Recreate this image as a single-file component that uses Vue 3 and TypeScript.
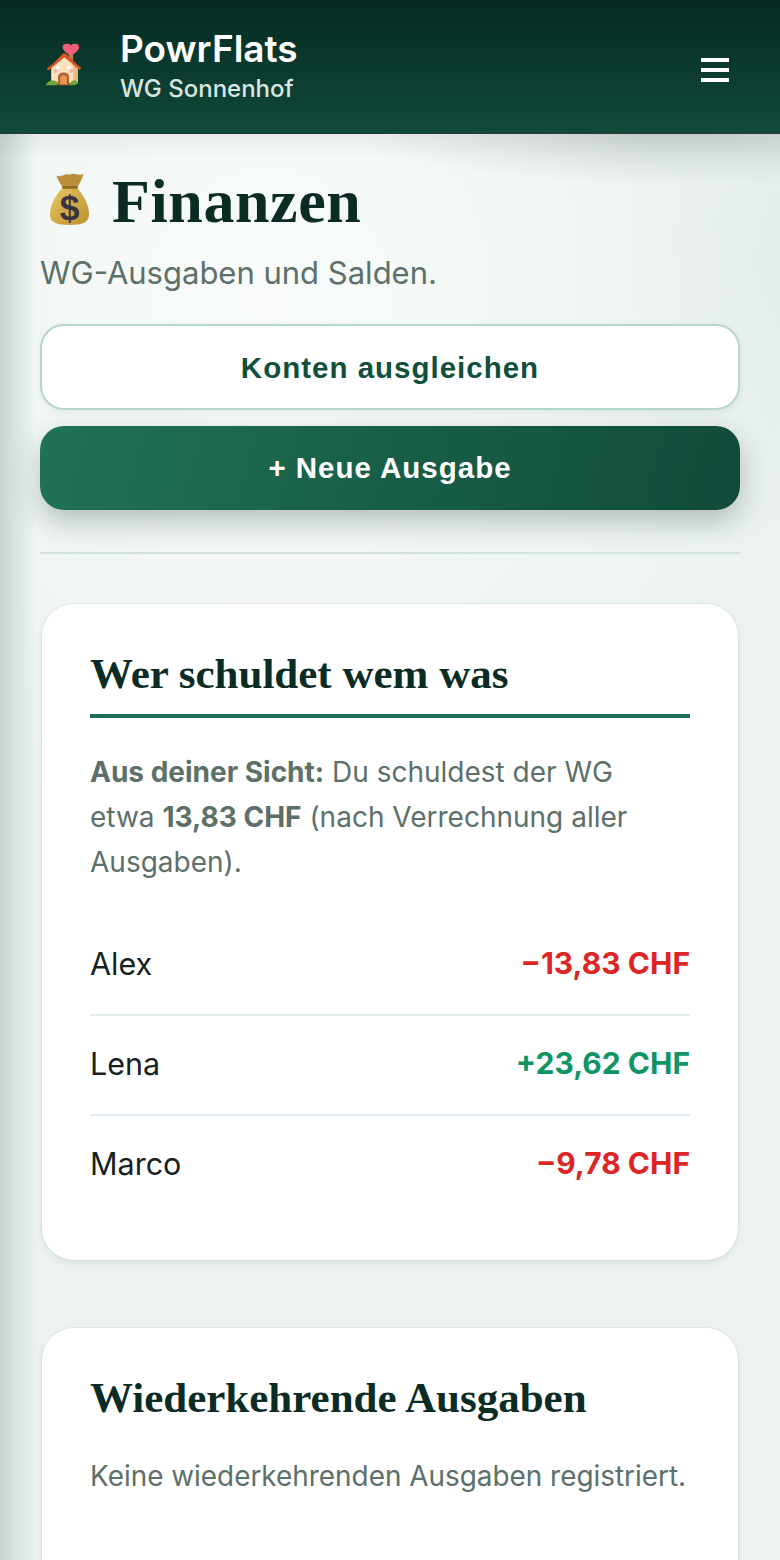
<template>
  <div class="app-shell">
    <header class="topbar">
      <div class="brand">
        <svg class="brand-icon" viewBox="0 0 40 48" aria-hidden="true">
          <rect x="25" y="11" width="5" height="13" fill="#b9784a" />
          <path d="M27.5 14 C21 10 18.5 7.5 18.5 4.4 C18.5 1 23 -.3 27.5 2.4 C32 -.3 36.5 1 36.5 4.4 C36.5 7.5 34 10 27.5 14Z" fill="#ee5f78" />
          <path d="M6 26 L20 13 L35 26 L35 44 L6 44Z" fill="#fae3bd" />
          <path d="M28 22 L35 27 L35 44 L30 44 L30 26Z" fill="#e5bb83" />
          <path d="M1 28 C8 23 14 17 19 11.5 L22 11.5 C27 17 33 23 39 27 L37 29.5 L20.5 15.5 L3 30Z" fill="#dc5227" />
          <circle cx="13.5" cy="26.5" r="1.8" fill="#fff" />
          <circle cx="25" cy="26.5" r="1.8" fill="#fff" />
          <circle cx="10.5" cy="30.5" r="2.2" fill="#f5b3a2" />
          <circle cx="28" cy="30.5" r="2.2" fill="#f5b3a2" />
          <path d="M13.5 46 V37 C13.5 30.5 25.5 30.5 25.5 37 V46Z" fill="#b95f2b" />
          <path d="M16 45 V38 C16 34 23 34 23 38 V45Z" fill="#e19a56" />
          <path d="M0 46 C2 41 9 39 13.5 43 L12.5 46Z" fill="#73a838" />
          <path d="M25.5 46 C28 40 32 39 35 43 C34 46 30 46 25.5 46Z" fill="#73a838" />
        </svg>
        <div class="brand-text">
          <span class="brand-name">PowrFlats</span>
          <span class="brand-sub">WG Sonnenhof</span>
        </div>
      </div>
      <button class="menu-btn" type="button" aria-label="Menü">
        <span></span><span></span><span></span>
      </button>
    </header>

    <main class="content">
      <h1 class="page-title">
        <svg class="title-icon" viewBox="0 0 44 58" aria-hidden="true">
          <defs>
            <linearGradient id="bagFill" x1="0" y1="0" x2="1" y2="1">
              <stop offset="0" stop-color="#e8c765" />
              <stop offset="1" stop-color="#bd8f30" />
            </linearGradient>
          </defs>
          <path d="M8 4 C14 6 17 1 22 3 C27 0 32 5 37 2 C36 7 33 12 30 17 H15 C12 12 9 8 8 4Z" fill="#bb8e3a" />
          <path d="M15 16 C8 24 1 34 1 46 C1 54 8 57 22 57 C36 57 43 54 43 46 C43 34 36 24 30 16Z" fill="url(#bagFill)" />
          <rect x="14" y="15" width="17" height="3" rx="1.5" fill="#8f6a22" />
          <text x="22" y="52" class="dollar">$</text>
        </svg>
        <span class="title-text">Finanzen</span>
      </h1>
      <p class="page-sub">WG-Ausgaben und Salden.</p>

      <div class="actions">
        <button class="btn btn-outline" type="button">Konten ausgleichen</button>
        <button class="btn btn-primary" type="button">+ Neue Ausgabe</button>
      </div>

      <hr class="divider" />

      <section class="card">
        <h2 class="card-title underlined">Wer schuldet wem was</h2>
        <p class="note summary">
          <strong>Aus deiner Sicht:</strong> Du schuldest der WG etwa
          <strong>13,83 CHF</strong> (nach Verrechnung aller Ausgaben).
        </p>
        <ul class="balances">
          <li v-for="item in balances" :key="item.name" class="balance-row">
            <span class="balance-name">{{ item.name }}</span>
            <span class="balance-value" :class="item.amount.startsWith('+') ? 'pos' : 'neg'">{{ item.amount }}</span>
          </li>
        </ul>
      </section>

      <section class="card">
        <h2 class="card-title">Wiederkehrende Ausgaben</h2>
        <p class="note empty">Keine wiederkehrenden Ausgaben registriert.</p>
      </section>
    </main>
  </div>
</template>

<script setup lang="ts">
interface Balance {
  name: string;
  amount: string;
}

const balances: Balance[] = [
  { name: 'Alex', amount: '−13,83 CHF' },
  { name: 'Lena', amount: '+23,62 CHF' },
  { name: 'Marco', amount: '−9,78 CHF' },
];
</script>

<style>
html,
body {
  margin: 0;
  background: #ecf3ef;
}
</style>

<style scoped>
.app-shell {
  width: 780px;
  height: 1560px;
  overflow: hidden;
  position: relative;
  font-family: Inter, "Noto Sans", sans-serif;
  background:
    radial-gradient(300px 50px at 660px 134px, rgba(40, 60, 50, 0.16), rgba(40, 60, 50, 0) 100%),
    linear-gradient(180deg, rgba(0, 0, 0, 0.05), rgba(0, 0, 0, 0) 24px) 0 134px no-repeat,
    linear-gradient(90deg, #c6d4cf 0, #dbe5e1 18px, rgba(230, 238, 235, 0) 36px),
    radial-gradient(520px 560px at 270px 300px, #f8fbfa 0, rgba(248, 251, 250, 0) 100%),
    radial-gradient(240px 300px at 780px 260px, #e3ece8 0, rgba(227, 236, 232, 0) 100%),
    #ecf3ef;
}

.topbar {
  height: 134px;
  box-sizing: border-box;
  padding: 0 51px 0 40px;
  display: flex;
  align-items: center;
  justify-content: space-between;
  background: linear-gradient(180deg, #062a22, #104a3a);
  border-bottom: 1px solid #1f3a33;
}

.brand {
  display: flex;
  align-items: center;
  gap: 37px;
}

.brand-icon {
  width: 38px;
  height: 44px;
  margin: -3px 0 0 5px;
}

.brand-text {
  display: flex;
  flex-direction: column;
  gap: 5px;
  margin-top: -2px;
}

.brand-name {
  color: #fff;
  font-size: 37px;
  line-height: 42px;
  font-weight: 600;
}

.brand-sub {
  color: #dbe5e1;
  font-size: 24px;
  line-height: 28px;
  font-weight: 500;
}

.menu-btn {
  width: 28px;
  padding: 0;
  margin-top: 6px;
  border: 0;
  background: none;
  display: flex;
  flex-direction: column;
  gap: 6px;
}

.menu-btn span {
  display: block;
  height: 4px;
  background: #fff;
}

.content {
  padding: 36px 40px 0;
}

.page-title {
  margin: 0;
  display: flex;
  align-items: center;
  gap: 22px;
  font-family: "Liberation Serif", serif;
  font-size: 62px;
  line-height: 62px;
  font-weight: 700;
  color: #0b2c25;
}

.title-text {
  letter-spacing: 0.6px;
}

.title-icon {
  width: 41px;
  height: 54px;
  margin-left: 9px;
  margin-top: -5px;
}

.dollar {
  font-family: "Liberation Sans", sans-serif;
  font-size: 38px;
  font-weight: 700;
  text-anchor: middle;
  fill: #3a3340;
}

.page-sub {
  margin: 21px 0 0;
  font-size: 31px;
  line-height: 40px;
  color: #5c7069;
}

.actions {
  margin-top: 31px;
  display: flex;
  flex-direction: column;
  gap: 16px;
}

.btn {
  width: 700px;
  height: 84px;
  border-radius: 24px;
  font-family: "Liberation Sans", Arial, sans-serif;
  font-size: 29.5px;
  font-weight: 700;
  letter-spacing: 1px;
}

.btn-outline {
  height: 86px;
  padding-top: 2px;
  background: #fff;
  color: #0f4f3c;
  border: 2px solid #b6d6c9;
  box-shadow: 0 2px 6px rgba(20, 60, 45, 0.08);
}

.btn-primary {
  color: #fff;
  border: 0;
  background: linear-gradient(105deg, #207355, #114a3a);
  box-shadow: 0 12px 28px rgba(20, 50, 40, 0.28);
}

.divider {
  margin: 42px 0 0;
  height: 2px;
  border: 0;
  background: #d3e4dd;
}

.card {
  margin: 50px 2px 0;
  padding: 47px 48px 48px;
  background: #fff;
  border-radius: 32px;
  box-shadow: 0 0 0 1px rgba(30, 70, 55, 0.05), 0 3px 6px rgba(30, 70, 55, 0.09);
}

.card + .card {
  margin-top: 68px;
  padding-bottom: 120px;
}

.card-title {
  margin: 0;
  font-family: "Liberation Serif", serif;
  font-size: 43px;
  line-height: 46px;
  font-weight: 700;
  color: #0b2c25;
}

.underlined {
  padding-bottom: 17px;
  border-bottom: 4px solid #1f6f54;
}

.note {
  margin: 32px 0 0;
  font-size: 28px;
  line-height: 45px;
  color: #5c7069;
}

.summary {
  max-width: 570px;
}

.note strong {
  font-weight: 700;
}

.note.empty {
  margin-top: 33px;
  font-size: 27.9px;
}

.balances {
  list-style: none;
  margin: 31px 0 0;
  padding: 0;
}

.balance-row {
  height: 100px;
  box-sizing: border-box;
  padding-bottom: 4px;
  display: flex;
  align-items: center;
  justify-content: space-between;
  font-size: 30.5px;
  border-bottom: 2px solid #e1ece8;
}

.balance-row:last-child {
  height: 96px;
  padding-bottom: 2px;
  border-bottom: 0;
}

.balance-name {
  color: #17211e;
}

.balance-value {
  font-size: 30px;
  font-weight: 700;
}

.pos {
  color: #0f9463;
}

.neg {
  color: #dc2626;
}
</style>
